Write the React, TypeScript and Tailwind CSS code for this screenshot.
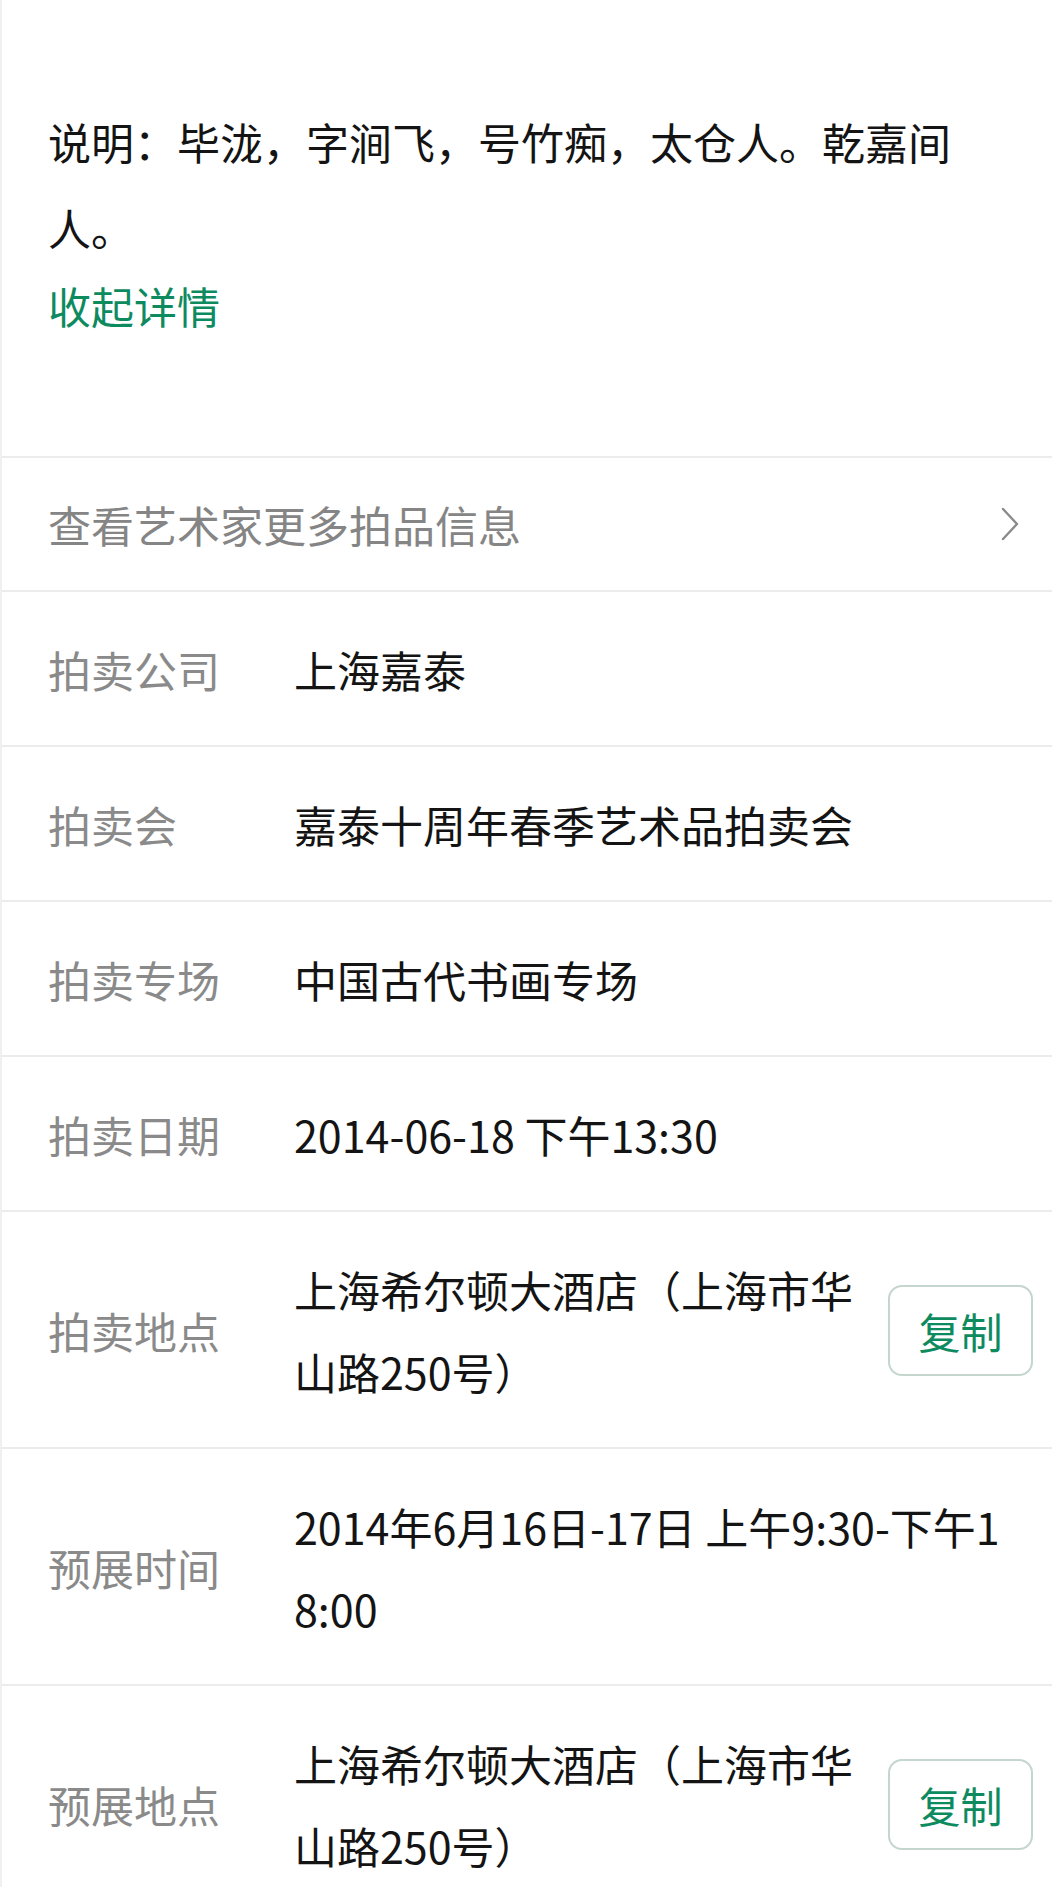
import React from "react";

const FONT = {
  fontFamily:
    '"Noto Sans CJK SC", "Noto Sans", "Liberation Sans", sans-serif',
};

function Row({
  label,
  value,
  copy,
}: {
  label: string;
  value: string;
  copy?: boolean;
}) {
  return (
    <div className="flex items-center border-t-2 border-[#ececec] pt-[36px] pb-[35px] pl-[46px] pr-[19px]">
      <div className="w-[246px] shrink-0 text-[43px] leading-[82px] text-[#8a8a8a]">
        {label}
      </div>
      <div className="flex-1 break-all pr-[24px] text-[43px] leading-[82px] text-[#141414]">
        {value}
      </div>
      {copy && (
        <button className="flex h-[91px] w-[145px] shrink-0 items-center justify-center rounded-[14px] border-2 border-[#c4d6cd] bg-white text-[42px] text-[#0e8a5f]">
          复制
        </button>
      )}
    </div>
  );
}

export default function App() {
  return (
    <div
      className="min-h-[1887px] w-[1052px] border-l-2 border-[#f0f0f0] bg-white"
      style={FONT}
    >
      <div className="pl-[46px] pr-[48px] pt-[98px] pb-[121px]">
        <p className="text-[43px] leading-[86px] text-[#141414]">
          说明：毕泷，字涧飞，号竹痴，太仓人。乾嘉间人。
        </p>
        <div className="mt-[5px] text-[43px] leading-[60px] text-[#0e8a5f]">
          收起详情
        </div>
      </div>

      <div className="flex h-[134px] items-center justify-between border-t-2 border-[#ececec] pl-[46px] pr-[32px]">
        <span className="text-[43px] text-[#858585]">查看艺术家更多拍品信息</span>
        <svg
          width="20"
          height="34"
          viewBox="0 0 20 34"
          fill="none"
          stroke="#8a8a8a"
          strokeWidth="2.4"
          strokeLinecap="round"
          strokeLinejoin="round"
        >
          <path d="M3 2 L17 17 L3 32" />
        </svg>
      </div>

      <Row label="拍卖公司" value="上海嘉泰" />
      <Row label="拍卖会" value="嘉泰十周年春季艺术品拍卖会" />
      <Row label="拍卖专场" value="中国古代书画专场" />
      <Row label="拍卖日期" value="2014-06-18 下午13:30" />
      <Row label="拍卖地点" value="上海希尔顿大酒店（上海市华山路250号）" copy />
      <Row label="预展时间" value="2014年6月16日-17日 上午9:30-下午18:00" />
      <Row label="预展地点" value="上海希尔顿大酒店（上海市华山路250号）" copy />
    </div>
  );
}
